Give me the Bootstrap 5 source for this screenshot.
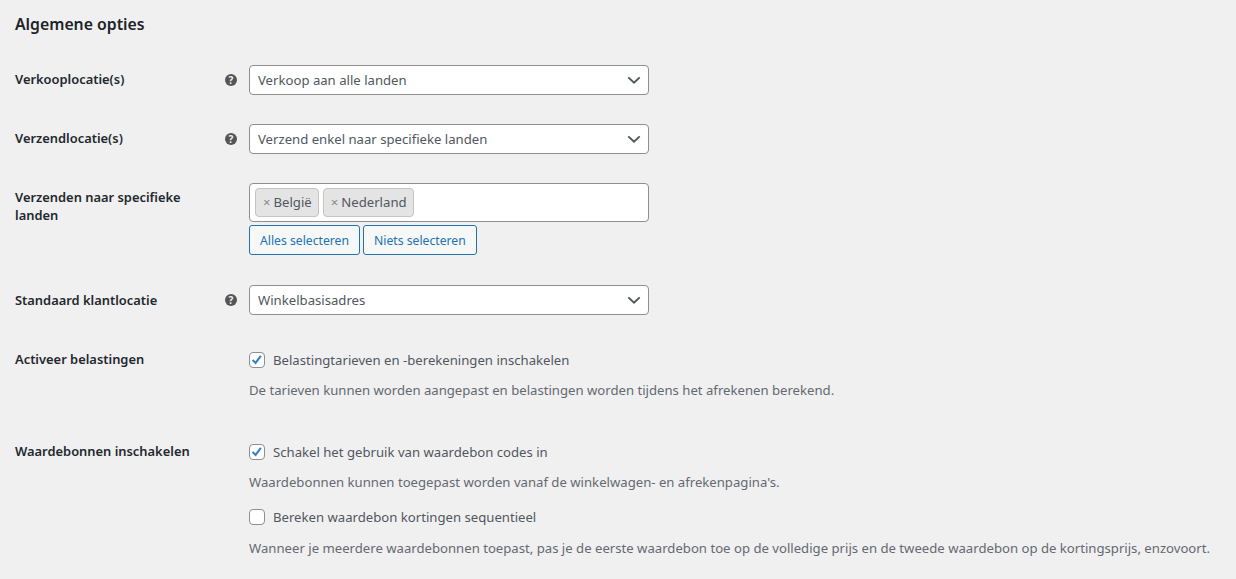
<!DOCTYPE html>
<html lang="nl">
<head>
    <meta charset="UTF-8">
    <meta name="viewport" content="width=device-width, initial-scale=1.0">
    <title>Algemene opties</title>
    <link href="https://cdn.jsdelivr.net/npm/bootstrap@5.3.0/dist/css/bootstrap.min.css" rel="stylesheet">
    <style>
        body {
            background-color: #f0f0f1;
            color: #3c434a;
            font-family: "Noto Sans", "Open Sans", sans-serif;
            font-size: 13.15px;
            overflow: hidden;
        }
        .opties {
            padding: 14px 15px 0;
        }
        .opties h2 {
            font-size: 15.8px;
            font-weight: 600;
            line-height: 20px;
            color: #1d2327;
            margin-bottom: 31px;
        }
        .rij-label {
            width: 210px;
            font-size: 12.9px;
            font-weight: 600;
            color: #23282d;
            line-height: 18px;
        }
        .rij-label-mid {
            padding-bottom: 2px;
        }
        .rij-label-top {
            margin-top: -1px;
        }
        .rij-tip {
            width: 24px;
        }
        .tip-rond {
            width: 12px;
            height: 12px;
            border-radius: 50%;
            background: #555;
            color: #f0f0f1;
            font-size: 10px;
            font-weight: 700;
            line-height: 12px;
            text-align: center;
        }
        .veld {
            width: 400px;
        }
        .veld-select.form-select {
            height: 30px;
            padding: 2px 24px 0 8px;
            font-size: 13.15px;
            color: #50575e;
            border-color: #8c8f94;
            border-radius: 4px;
            background-image: url("data:image/svg+xml,%3csvg xmlns='http://www.w3.org/2000/svg' viewBox='0 0 16 16'%3e%3cpath fill='none' stroke='%2350575e' stroke-width='2.2' d='M1.5 5L8 11l6.5-6'/%3e%3c/svg%3e");
            background-position: right 7px center;
            background-size: 14px 14px;
        }
        .land-box {
            height: 39px;
            background: #fff;
            border: 1px solid #8c8f94;
            border-radius: 4px;
            padding: 4px 5px;
        }
        .land-tag {
            background: #e4e4e4;
            border: 1px solid #c4c4c4;
            border-radius: 4px;
            padding: 0 6px 0 7px;
            line-height: 27px;
            color: #50575e;
        }
        .land-tag span {
            color: #888;
            margin-right: 3px;
        }
        .knop-rij {
            gap: 3px;
            margin-top: 3px;
        }
        .knop-wp.btn {
            height: 30px;
            padding: 0 10px;
            font-size: 12.2px;
            line-height: 27px;
            color: #2271b1;
            background: #f6f7f7;
            border-color: #2271b1;
            border-radius: 3px;
        }
        .vink.form-check-input {
            width: 16px;
            height: 16px;
            margin: 0;
            flex: none;
            border-color: #8c8f94;
            border-radius: 4px;
            background-color: #fff;
        }
        .vink.form-check-input:checked {
            background-color: #fff;
            border-color: #8c8f94;
            background-image: url("data:image/svg+xml,%3csvg xmlns='http://www.w3.org/2000/svg' viewBox='0 0 16 16'%3e%3cpath fill='none' stroke='%233582c4' stroke-width='2.4' d='M3 8l3.4 3.4 6-8'/%3e%3c/svg%3e");
        }
        .vink-tekst {
            line-height: 18px;
            color: #50575e;
        }
        .uitleg {
            color: #646970;
            line-height: 18px;
            white-space: nowrap;
            margin: 0;
        }
    </style>
</head>
<body>
    <div class="opties">
        <h2>Algemene opties</h2>

        <div class="d-flex align-items-center">
            <div class="rij-label rij-label-mid">Verkooplocatie(s)</div>
            <div class="rij-tip"><div class="tip-rond">?</div></div>
            <select class="form-select veld veld-select"><option>Verkoop aan alle landen</option></select>
        </div>

        <div class="d-flex align-items-center" style="margin-top: 29px">
            <div class="rij-label rij-label-mid">Verzendlocatie(s)</div>
            <div class="rij-tip"><div class="tip-rond">?</div></div>
            <select class="form-select veld veld-select"><option>Verzend enkel naar specifieke landen</option></select>
        </div>

        <div class="d-flex" style="margin-top: 29px">
            <div class="rij-label" style="padding-top: 5px">Verzenden naar specifieke landen</div>
            <div class="rij-tip"></div>
            <div class="veld">
                <div class="land-box d-flex gap-1">
                    <div class="land-tag"><span>×</span>België</div>
                    <div class="land-tag"><span>×</span>Nederland</div>
                </div>
                <div class="d-flex knop-rij">
                    <button class="btn knop-wp">Alles selecteren</button>
                    <button class="btn knop-wp">Niets selecteren</button>
                </div>
            </div>
        </div>

        <div class="d-flex align-items-center" style="margin-top: 30px">
            <div class="rij-label">Standaard klantlocatie</div>
            <div class="rij-tip"><div class="tip-rond">?</div></div>
            <select class="form-select veld veld-select"><option>Winkelbasisadres</option></select>
        </div>

        <div class="d-flex" style="margin-top: 36px">
            <div class="rij-label rij-label-top">Activeer belastingen</div>
            <div class="rij-tip"></div>
            <div>
                <div class="d-flex align-items-center gap-2">
                    <input class="form-check-input vink" type="checkbox" checked>
                    <span class="vink-tekst">Belastingtarieven en -berekeningen inschakelen</span>
                </div>
                <p class="uitleg" style="margin-top: 12px">De tarieven kunnen worden aangepast en belastingen worden tijdens het afrekenen berekend.</p>
            </div>
        </div>

        <div class="d-flex" style="margin-top: 44px">
            <div class="rij-label rij-label-top">Waardebonnen inschakelen</div>
            <div class="rij-tip"></div>
            <div>
                <div class="d-flex align-items-center gap-2">
                    <input class="form-check-input vink" type="checkbox" checked>
                    <span class="vink-tekst">Schakel het gebruik van waardebon codes in</span>
                </div>
                <p class="uitleg" style="margin-top: 12px">Waardebonnen kunnen toegepast worden vanaf de winkelwagen- en afrekenpagina's.</p>
                <div class="d-flex align-items-center gap-2" style="margin-top: 17px">
                    <input class="form-check-input vink" type="checkbox">
                    <span class="vink-tekst">Bereken waardebon kortingen sequentieel</span>
                </div>
                <p class="uitleg" style="margin-top: 13px">Wanneer je meerdere waardebonnen toepast, pas je de eerste waardebon toe op de volledige prijs en de tweede waardebon op de kortingsprijs, enzovoort.</p>
            </div>
        </div>
    </div>
    <script src="https://cdn.jsdelivr.net/npm/bootstrap@5.3.0/dist/js/bootstrap.bundle.min.js"></script>
</body>
</html>
